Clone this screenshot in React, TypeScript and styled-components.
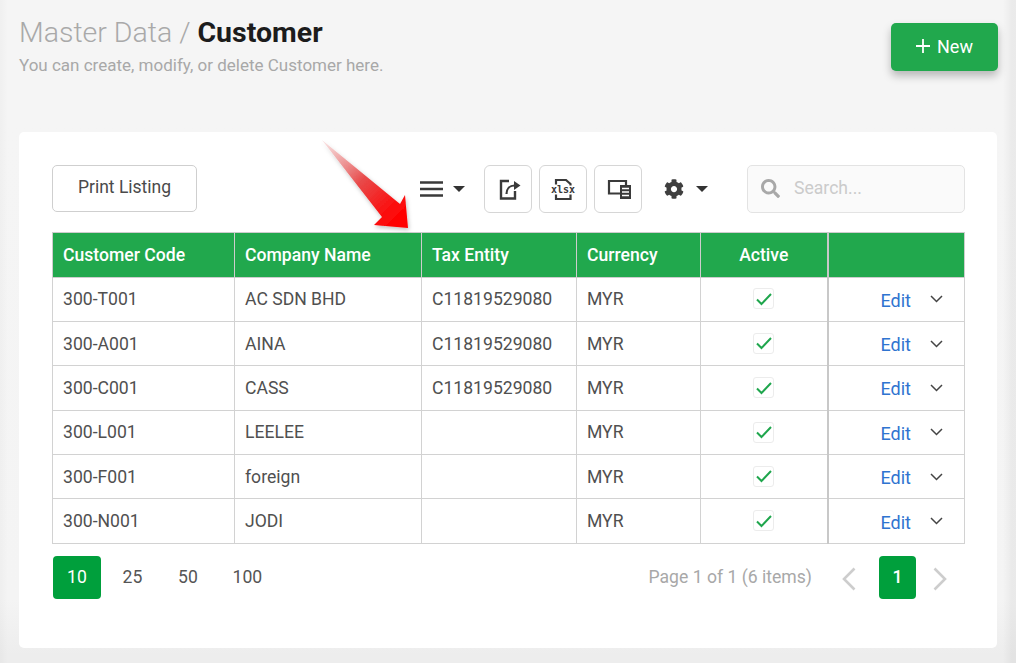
import React from "react";
import styled, { createGlobalStyle } from "styled-components";
import { FaCog, FaSearch } from "react-icons/fa";

const Global = createGlobalStyle`
  html, body { margin: 0; padding: 0; }
  body {
    width: 1016px; height: 663px; overflow: hidden;
    background: #f5f5f5;
    font-family: Roboto, "Liberation Sans", sans-serif;
  }
`;

const Page = styled.div`
  position: relative;
  width: 1016px;
  height: 663px;
  box-sizing: border-box;
  padding: 15px 18px 15px 19px;
  background:
    linear-gradient(to right, rgba(0,0,0,.025), rgba(0,0,0,0) 8px, rgba(0,0,0,0) 1003px, rgba(0,0,0,.045) 1012px),
    linear-gradient(to bottom, #f5f5f5 120px, #f4f4f4 600px, #ededed 655px);
`;

const Header = styled.header`
  display: flex;
  justify-content: space-between;
  align-items: flex-start;
  height: 117px;
`;

const TitleBlock = styled.div`
  display: flex;
  flex-direction: column;
`;

const Title = styled.h1`
  margin: 0;
  font-size: 28.5px;
  line-height: 35px;
  font-weight: 300;
  color: #a9a9a9;
  strong { font-weight: 700; color: #1c1c1c; }
`;

const Subtitle = styled.p`
  margin: 2px 0 0;
  font-size: 17px;
  line-height: 26px;
  color: #a8a8a8;
`;

const NewButton = styled.button`
  margin-top: 8px;
  width: 107px;
  height: 48px;
  padding: 0 0 2px;
  display: flex;
  align-items: center;
  justify-content: center;
  gap: 7px;
  border: none;
  border-radius: 5px;
  background: #21a84d;
  color: #fff;
  font: 400 18px Roboto, sans-serif;
  box-shadow: 0 5px 8px rgba(0,0,0,.25);
  svg { display: block; }
`;

const Card = styled.section`
  box-sizing: border-box;
  width: 978px;
  height: 516px;
  padding: 33px 32px 0 33px;
  background: #fff;
  border-radius: 5px;
`;

const Toolbar = styled.div`
  display: flex;
  align-items: flex-start;
  height: 66.5px;
`;

const PrintButton = styled.button`
  box-sizing: border-box;
  width: 145px;
  height: 47px;
  padding: 0 0 3px;
  background: #fff;
  border: 1px solid #cfcfcf;
  border-radius: 5px;
  color: #4a4a4a;
  font: 400 17.5px Roboto, sans-serif;
`;

const MenuTrigger = styled.div<{ $left: number; $gap: number }>`
  display: flex;
  align-items: center;
  gap: ${(p) => p.$gap}px;
  height: 48px;
  margin-left: ${(p) => p.$left}px;
  color: #3f3f3f;
`;

const Caret = styled.span`
  width: 0;
  height: 0;
  border-left: 6px solid transparent;
  border-right: 6px solid transparent;
  border-top: 6px solid #333;
`;

const IconButton = styled.button<{ $left: number }>`
  box-sizing: border-box;
  width: 48px;
  height: 48px;
  padding: 0;
  margin-left: ${(p) => p.$left}px;
  display: flex;
  align-items: center;
  justify-content: center;
  background: #fff;
  border: 1px solid #d6d6d6;
  border-radius: 6px;
  color: #3a3a3a;
`;

const SearchBox = styled.div`
  box-sizing: border-box;
  width: 218px;
  height: 48px;
  margin-left: 39px;
  padding: 0 0 2px 13px;
  display: flex;
  align-items: center;
  gap: 14px;
  background: #fafafa;
  border: 1px solid #e3e3e3;
  border-radius: 5px;
  color: #a8a8a8;
`;

const SearchPlaceholder = styled.span`
  font-size: 17.6px;
  color: #cbcbcb;
`;

const Table = styled.table`
  width: 912px;
  table-layout: fixed;
  border-collapse: collapse;
  font-size: 17.6px;
  color: #505050;
`;

const HeadCell = styled.th<{ $center?: boolean; $action?: boolean }>`
  height: 45px;
  padding: 0 10px;
  box-sizing: border-box;
  background: #21a84d;
  border: 1.5px solid #cdcdcd;
  ${(p) => p.$action && "border-left: 2.5px solid #c8c8c8;"}
  color: #fff;
  font-weight: 500;
  font-size: 17.6px;
  text-align: ${(p) => (p.$center ? "center" : "left")};
`;

const Row = styled.tr`
  height: 44.4px;
`;

const Cell = styled.td<{ $center?: boolean; $action?: boolean }>`
  padding: 0 10px;
  box-sizing: border-box;
  border: 1.5px solid #d2d2d2;
  ${(p) => p.$action && "border-left: 2.5px solid #c8c8c8;"}
  text-align: ${(p) => (p.$center ? "center" : "left")};
`;

const ActionCellInner = styled.div`
  display: flex;
  align-items: center;
  justify-content: flex-end;
  gap: 19px;
  padding-right: 11px;
`;

const CheckBox = styled.span`
  box-sizing: border-box;
  display: inline-flex;
  align-items: center;
  justify-content: center;
  width: 21px;
  height: 21px;
  margin-top: -3px;
  border: 1px solid #ececec;
  border-radius: 3px;
  background: #fff;
  vertical-align: middle;
`;

const EditLink = styled.a`
  color: #2f74d0;
  font-size: 18px;
  margin-top: 2px;
`;

const Footer = styled.div`
  display: flex;
  justify-content: space-between;
  align-items: center;
  margin-top: 12.5px;
`;

const PageSizes = styled.div`
  display: flex;
  gap: 7.500px;
  margin-left: 1px;
`;

const SizeButton = styled.span<{ $active?: boolean }>`
  box-sizing: border-box;
  height: 43px;
  min-width: 48px;
  padding: 0 13px 2px;
  display: flex;
  align-items: center;
  justify-content: center;
  border-radius: 4px;
  font-size: 17.6px;
  background: ${(p) => (p.$active ? "#009f3c" : "transparent")};
  color: ${(p) => (p.$active ? "#fff" : "#555")};
`;

const Pager = styled.div`
  display: flex;
  align-items: center;
  margin-right: 18px;
`;

const PageInfo = styled.span`
  font-size: 17.6px;
  color: #a8a8a8;
  margin: -2px 30px 0 0;
`;

const PageCurrent = styled.span`
  box-sizing: border-box;
  width: 37px;
  height: 43px;
  margin: 0 17px 0 23px;
  padding-bottom: 2px;
  display: flex;
  align-items: center;
  justify-content: center;
  border-radius: 4px;
  background: #009f3c;
  color: #fff;
  font-size: 17.6px;
  font-weight: 500;
`;

const PagerArrow = styled.svg`
  display: block;
  margin-top: 3px;
`;

const ArrowOverlay = styled.svg`
  position: absolute;
  left: 310px;
  top: 130px;
  overflow: visible;
  pointer-events: none;
`;

const ExportIcon = () => (
  <svg width="26" height="26" viewBox="0 0 26 26" fill="none" stroke="#3a3a3a" strokeWidth="2.4">
    <path d="M14 5H6v17.500h14V15" />
    <path d="M11.500 18c0-5 3-8.500 8-8.500" strokeWidth="2.2" />
    <path d="M19 5l6.500 4.500L19 14z" fill="#3a3a3a" stroke="none" />
  </svg>
);

const XlsxIcon = () => (
  <svg width="26" height="28" viewBox="0 0 26 28" fill="none" stroke="#3a3a3a" strokeWidth="2.2">
    <path d="M6 9.500V5h10l4.500 4v1.500M6 19.500V24h14.500v-4.500" />
    <text x="13" y="18" textAnchor="middle" fontFamily="'DejaVu Sans Mono', monospace" fontSize="10" fontWeight="700" fill="#3a3a3a" stroke="none">xlsx</text>
  </svg>
);

const CopyIcon = () => (
  <svg width="27" height="24" viewBox="0 0 27 24" fill="none" stroke="#3a3a3a" strokeWidth="2.2">
    <path d="M15 16.500H4V4h17v4" />
    <rect x="15" y="8" width="11" height="14" fill="#3a3a3a" stroke="none" />
    <path d="M17 11.500h7M17 15h7M17 18.500h7" stroke="#fff" strokeWidth="1.4" />
  </svg>
);

const BarsIcon = () => (
  <svg width="23" height="18" viewBox="0 0 23 18" fill="none" stroke="#3a3a3a" strokeWidth="2.6">
    <path d="M0 2.500h23M0 9h23M0 15.500h23" />
  </svg>
);

const Check = () => (
  <svg width="16" height="14" viewBox="0 0 16 14" fill="none" stroke="#1fa64d" strokeWidth="2">
    <path d="M1 7.500 5.500 12 15 2" />
  </svg>
);

const Chevron = () => (
  <svg width="13" height="8" viewBox="0 0 13 8" fill="none" stroke="#444" strokeWidth="1.5">
    <path d="M1 1l5.500 5.500L12 1" />
  </svg>
);

const rows = [
  ["300-T001", "AC SDN BHD", "C11819529080"],
  ["300-A001", "AINA", "C11819529080"],
  ["300-C001", "CASS", "C11819529080"],
  ["300-L001", "LEELEE", ""],
  ["300-F001", "foreign", ""],
  ["300-N001", "JODI", ""],
];

export default function App() {
  return (
    <Page>
      <Global />
      <Header>
        <TitleBlock>
          <Title>
            Master Data / <strong>Customer</strong>
          </Title>
          <Subtitle>You can create, modify, or delete Customer here.</Subtitle>
        </TitleBlock>
        <NewButton>
          <svg width="14" height="14" viewBox="0 0 14 14" stroke="#fff" strokeWidth="1.8">
            <path d="M7 0v14M0 7h14" />
          </svg>
          New
        </NewButton>
      </Header>
      <Card>
        <Toolbar>
          <PrintButton>Print Listing</PrintButton>
          <MenuTrigger $left={223} $gap={10}>
            <BarsIcon />
            <Caret />
          </MenuTrigger>
          <IconButton $left={19}>
            <ExportIcon />
          </IconButton>
          <IconButton $left={7}>
            <XlsxIcon />
          </IconButton>
          <IconButton $left={7}>
            <CopyIcon />
          </IconButton>
          <MenuTrigger $left={22} $gap={12}>
            <FaCog size={20} />
            <Caret />
          </MenuTrigger>
          <SearchBox>
            <FaSearch size={19} />
            <SearchPlaceholder>Search...</SearchPlaceholder>
          </SearchBox>
        </Toolbar>
        <Table>
          <colgroup>
            <col width="182" />
            <col width="187" />
            <col width="155" />
            <col width="124" />
            <col width="127" />
            <col width="137" />
          </colgroup>
          <thead>
            <tr>
              <HeadCell>Customer Code</HeadCell>
              <HeadCell>Company Name</HeadCell>
              <HeadCell>Tax Entity</HeadCell>
              <HeadCell>Currency</HeadCell>
              <HeadCell $center>Active</HeadCell>
              <HeadCell $action />
            </tr>
          </thead>
          <tbody>
            {rows.map((r) => (
              <Row key={r[0]}>
                <Cell>{r[0]}</Cell>
                <Cell>{r[1]}</Cell>
                <Cell>{r[2]}</Cell>
                <Cell>MYR</Cell>
                <Cell $center>
                  <CheckBox>
                    <Check />
                  </CheckBox>
                </Cell>
                <Cell $action>
                  <ActionCellInner>
                    <EditLink>Edit</EditLink>
                    <Chevron />
                  </ActionCellInner>
                </Cell>
              </Row>
            ))}
          </tbody>
        </Table>
        <Footer>
          <PageSizes>
            <SizeButton $active>10</SizeButton>
            <SizeButton>25</SizeButton>
            <SizeButton>50</SizeButton>
            <SizeButton>100</SizeButton>
          </PageSizes>
          <Pager>
            <PageInfo>Page 1 of 1 (6 items)</PageInfo>
            <PagerArrow width="14" height="24" viewBox="0 0 14 24" fill="none" stroke="#cdcdcd" strokeWidth="2.6">
              <path d="M12.500 1.500 2 12l10.500 10.500" />
            </PagerArrow>
            <PageCurrent>1</PageCurrent>
            <PagerArrow width="14" height="24" viewBox="0 0 14 24" fill="none" stroke="#cdcdcd" strokeWidth="2.6">
              <path d="M1.500 1.500 12 12 1.500 22.500" />
            </PagerArrow>
          </Pager>
        </Footer>
      </Card>
      <ArrowOverlay width="110" height="110" viewBox="310 130 110 110">
        <defs>
          <linearGradient id="arrowFill" x1="322" y1="140" x2="400" y2="222" gradientUnits="userSpaceOnUse">
            <stop offset="0" stopColor="#f4c9c9" stopOpacity="0.5" />
            <stop offset="0.5" stopColor="#e84a4a" />
            <stop offset="0.85" stopColor="#fb0f0f" />
            <stop offset="1" stopColor="#ff0000" />
          </linearGradient>
          <filter id="arrowShadow" x="-20%" y="-20%" width="140%" height="140%">
            <feDropShadow dx="1" dy="2" stdDeviation="2" floodColor="#000" floodOpacity="0.25" />
          </filter>
        </defs>
        <polygon points="322,140 400,204 405,195 408,228 374,225 382,217" fill="url(#arrowFill)" filter="url(#arrowShadow)" />
      </ArrowOverlay>
    </Page>
  );
}
